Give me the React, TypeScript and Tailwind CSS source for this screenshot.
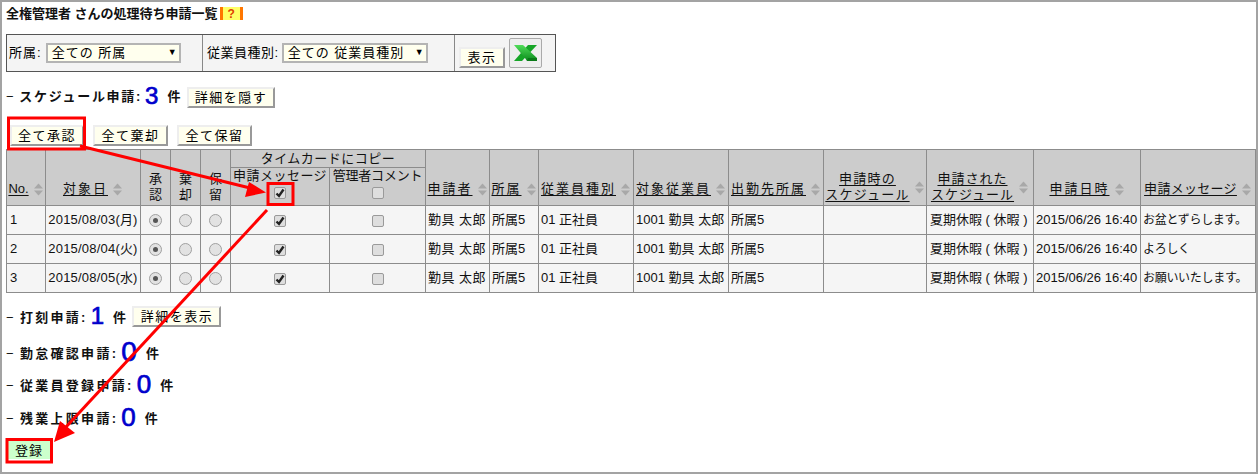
import React from 'react';

const font = { fontFamily: '"Liberation Sans", "Noto Sans CJK JP", sans-serif' };

const rows = [
  { no: 1, date: '2015/08/03(月)', msg: 'お盆とずらします。' },
  { no: 2, date: '2015/08/04(火)', msg: 'よろしく' },
  { no: 3, date: '2015/08/05(水)', msg: 'お願いいたします。' },
];

const colWidths = [39, 95, 30, 30, 30, 99, 96, 64, 49, 95, 95, 95, 103, 107, 107, 115];

function Sort() {
  return (
    <svg width="11" height="13" viewBox="0 0 11 13" className="inline-block align-middle ml-[4px] shrink-0">
      <path d="M5.5 0.5 10 5.5 H1 Z" fill="#a8a8a8" />
      <path d="M5.5 12.5 10 7.5 H1 Z" fill="#a8a8a8" />
    </svg>
  );
}

function Check({ on }: { on?: boolean }) {
  return (
    <span className="inline-flex w-[12px] h-[12px] items-center justify-center rounded-[2px] border border-[#9a9a9a] bg-[#dedede] align-middle">
      {on && (
        <svg width="10" height="10" viewBox="0 0 10 10">
          <path d="M1.5 5.5 L4 8 L8.5 1.5" stroke="#222" strokeWidth="2.4" fill="none" />
        </svg>
      )}
    </span>
  );
}

function Radio({ on }: { on?: boolean }) {
  return (
    <span className="inline-flex w-[13px] h-[13px] items-center justify-center rounded-full border border-[#a0a0a0] bg-[#e2e2e2] align-middle">
      {on && <span className="w-[5px] h-[5px] rounded-full bg-[#555]" />}
    </span>
  );
}

function Btn({ children, className = '' }: { children: React.ReactNode; className?: string }) {
  return (
    <button className={`h-[21px] bg-[#ffffee] border-2 border-t-[#eeeeee] border-l-[#eeeeee] border-r-[#999] border-b-[#999] text-[13px] leading-none tracking-[1.5px] text-black ${className}`}>
      {children}
    </button>
  );
}

function Fake({ label, width }: { label: string; width: string }) {
  return (
    <span className={`inline-flex h-[20px] items-center justify-between bg-[#ffffee] border-2 border-[#b4b4b4] pl-[4px] pr-[1px] text-[13px] tracking-[1px] ${width}`}>
      <span>{label}</span>
      <span className="text-[9px]">▼</span>
    </span>
  );
}

function Summary({ label, count, size = 'text-[24px]', lift = '-mt-[4px]', track = 'tracking-[2.3px]' }: { label: string; count: number; size?: string; lift?: string; track?: string }) {
  return (
    <div className={`flex items-center h-[24px] text-[13px] font-bold text-[#111] ${track}`}>
      <span className="mr-[4px] font-normal">−</span>
      <span>{label}:</span>
      <span className={`ml-[3px] mr-[9px] ${size} ${lift} leading-none font-normal text-[#0000cc] tracking-normal`} style={{ WebkitTextStroke: '0.7px #0000cc' }}>{count}</span>
      <span>件</span>
    </div>
  );
}

function Head({ children, sort = true, pb = 'pb-[8px]', track = 'tracking-[2px]', line = 'underline underline-offset-2' }: { children: React.ReactNode; sort?: boolean; pb?: string; track?: string; line?: string }) {
  return (
    <th rowSpan={2} className={`border border-[#8c8c8c] bg-[#cccccc] p-0 font-normal text-[13px] leading-[16px] align-bottom ${pb} ${track}`}>
      <span className="inline-flex items-center justify-center w-full whitespace-nowrap">
        <span className={`text-center ${line}`}>{children}</span>
        {sort && <Sort />}
      </span>
    </th>
  );
}

function Annotations() {
  return (
    <svg width="1258" height="474" className="absolute left-0 top-0 pointer-events-none">
      <g fill="none" stroke="#ff0000" strokeWidth="3">
        <rect x="8.5" y="118" width="76" height="31" />
        <rect x="268" y="183.5" width="25" height="21" />
        <rect x="7" y="439.5" width="44.5" height="22.5" />
        <line x1="80" y1="146" x2="250" y2="188" />
        <line x1="267" y1="210" x2="66" y2="427" />
      </g>
      <path d="M266 192.5 L249 182 L245 197 Z" fill="#ff0000" />
      <path d="M54 442 L60 421 L75 433 Z" fill="#ff0000" />
    </svg>
  );
}

function ExcelIcon() {
  return (
    <svg width="25" height="20" viewBox="0 0 25 20">
      <defs>
        <linearGradient id="xl" x1="0" y1="0" x2="0" y2="1">
          <stop offset="0" stopColor="#4fdc58" />
          <stop offset="1" stopColor="#0b8a1c" />
        </linearGradient>
      </defs>
      <path d="M15 2 H24 L9 18 H1 Z" fill="#16a527" />
      <path d="M1 2 H10 L24 15 V18 H14 L12 15 Z" fill="url(#xl)" />
      <path d="M14 18 H24 V15 L15 15 Z" fill="#0a7a18" />
    </svg>
  );
}

export default function App() {
  return (
    <div className="relative w-[1258px] h-[474px] overflow-hidden bg-white border-2 border-[#a3a3a3] text-black" style={font}>
      <div className="pl-[4px] pt-[2px]">
        <div className="flex items-center h-[19px] text-[13px] font-bold text-[#111]">
          <span>全権管理者 さんの処理待ち申請一覧</span>
          <span className="ml-[2px] inline-flex h-[13px] w-[23px] items-center justify-center bg-[#ffff66] border-x-[3px] border-[#ff7700] text-[12px] font-bold leading-none text-[#e04000]">?</span>
        </div>

        <div className="mt-[11px] flex w-[550px] h-[38px] border border-[#555] bg-[#f4f4f4]">
          <div className="flex items-center w-[196px] pl-[2px] border-r border-[#888] text-[13px] tracking-[1px]">
            <span className="mr-[4px]">所属:</span>
            <Fake label="全ての 所属" width="w-[135px]" />
          </div>
          <div className="flex items-center w-[252px] pl-[4px] border-r border-[#888] text-[13px] tracking-[0.5px]">
            <span className="mr-[3px]">従業員種別:</span>
            <Fake label="全ての 従業員種別" width="w-[146px]" />
          </div>
          <div className="flex items-start pl-[4px] pt-[3px] gap-[4px]">
            <Btn className="w-[46px] mt-[9px]">表示</Btn>
            <span className="flex w-[33px] h-[30px] items-center justify-center rounded-[2px] border border-[#aaa] bg-[#eeeeee]">
              <ExcelIcon />
            </span>
          </div>
        </div>

        <div className="mt-[13px] flex items-center h-[24px]">
          <Summary label="スケジュール申請" count={3} lift="-mt-[2px]" track="tracking-[1.7px]" />
          <Btn className="ml-[5px] w-[88px]">詳細を隠す</Btn>
        </div>

        <div className="mt-[16px] flex items-center gap-[9px] pl-[4px] h-[21px]">
          <Btn className="w-[74px]">全て承認</Btn>
          <Btn className="w-[75px]">全て棄却</Btn>
          <Btn className="w-[75px]">全て保留</Btn>
        </div>

        <table className="mt-[3px] table-fixed border-collapse w-[1249px] text-[13px] text-[#111]">
          <colgroup>
            {colWidths.map((w, i) => (
              <col key={i} style={{ width: w }} />
            ))}
          </colgroup>
          <thead>
            <tr className="h-[18px]">
              <Head track="tracking-normal">No.</Head>
              <Head>対象日</Head>
              <Head sort={false} pb="pb-[2px]" track="tracking-normal" line="no-underline">承<br />認</Head>
              <Head sort={false} pb="pb-[2px]" track="tracking-normal" line="no-underline">棄<br />却</Head>
              <Head sort={false} pb="pb-[2px]" track="tracking-normal" line="no-underline">保<br />留</Head>
              <th colSpan={2} className="border border-[#8c8c8c] bg-[#cccccc] p-0 font-normal text-[13px] leading-none tracking-[0.5px]">タイムカードにコピー</th>
              <Head>申請者</Head>
              <Head>所属</Head>
              <Head>従業員種別</Head>
              <Head>対象従業員</Head>
              <Head>出勤先所属</Head>
              <Head pb="pb-[2px]" track="tracking-[1.2px]">申請時の<br />スケジュール</Head>
              <Head pb="pb-[2px]" track="tracking-[1px]">申請された<br />スケジュール</Head>
              <Head>申請日時</Head>
              <Head track="tracking-[0.3px]">申請メッセージ</Head>
            </tr>
            <tr className="h-[38px]">
              <th className="border border-[#8c8c8c] bg-[#cccccc] p-0 font-normal text-[13px] leading-[16px] tracking-[0.5px] align-top whitespace-nowrap">
                申請メッセージ
                <div className="leading-[16px]"><Check on /></div>
              </th>
              <th className="border border-[#8c8c8c] bg-[#cccccc] p-0 font-normal text-[13px] leading-[16px] tracking-[-0.2px] align-top whitespace-nowrap">
                管理者コメント
                <div className="leading-[16px]"><Check /></div>
              </th>
            </tr>
          </thead>
          <tbody>
            {rows.map((r) => (
              <tr key={r.no} className="h-[29px] bg-[#f5f5f5] [&>td]:border [&>td]:border-[#8c8c8c] [&>td]:p-0 [&>td]:whitespace-nowrap [&>td]:overflow-hidden">
                <td className="pl-[3px]!">{r.no}</td>
                <td className="text-center tracking-[0.2px]">{r.date}</td>
                <td className="text-center"><Radio on /></td>
                <td className="text-center"><Radio /></td>
                <td className="text-center"><Radio /></td>
                <td className="text-center"><Check on /></td>
                <td className="text-center"><Check /></td>
                <td className="pl-[2px]! tracking-[0.5px]">勤具 太郎</td>
                <td className="pl-[2px]!">所属5</td>
                <td className="pl-[2px]!">01 正社員</td>
                <td className="pl-[2px]!">1001 勤具 太郎</td>
                <td className="pl-[2px]!">所属5</td>
                <td />
                <td className="pl-[3px]!">夏期休暇 ( 休暇 )</td>
                <td className="pl-[2px]!">2015/06/26 16:40</td>
                <td className="pl-[2px]! text-[12px] tracking-[-0.3px]">{r.msg}</td>
              </tr>
            ))}
          </tbody>
        </table>

        <div className="mt-[13px] flex items-center h-[24px]">
          <Summary label="打刻申請" count={1} />
          <Btn className="ml-[4px] w-[89px] -mt-[3px]">詳細を表示</Btn>
        </div>
        <div className="mt-[12px]"><Summary label="勤怠確認申請" count={0} size="text-[28px]" /></div>
        <div className="mt-[8px]"><Summary label="従業員登録申請" count={0} size="text-[26px]" /></div>
        <div className="mt-[9px]"><Summary label="残業上限申請" count={0} size="text-[26px]" /></div>
        <button className="mt-[10px] ml-[2px] w-[42px] h-[18px] bg-[#ccffcc] text-[13px] leading-none tracking-[1px] text-black">登録</button>
      </div>
      <div className="absolute -left-[2px] -top-[2px]"><Annotations /></div>
    </div>
  );
}
